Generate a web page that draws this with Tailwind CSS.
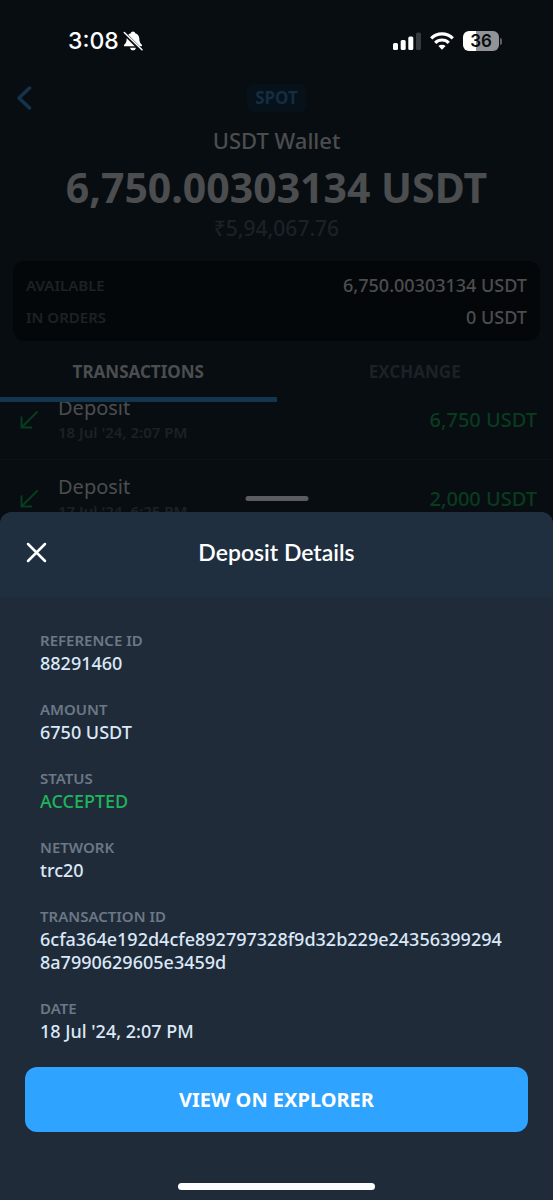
<!DOCTYPE html>
<html lang="en">
  <head>
    <meta charset="UTF-8" />
    <meta name="viewport" content="width=device-width, initial-scale=1.0" />
    <title>USDT Wallet</title>
    <script src="https://cdn.jsdelivr.net/npm/@tailwindcss/browser@4"></script>
  </head>
  <body class="bg-[#080d12] font-['Noto_Sans',sans-serif]">
    <main class="h-lvh flex flex-col overflow-hidden text-[#4c4d4f]">
      <!-- status bar -->
      <div
        class="h-[82px] shrink-0 pl-17 pr-[51px] flex items-center justify-between text-white font-['Inter',sans-serif]"
      >
        <div class="flex items-center gap-1">
          <span class="text-[23px] leading-8 font-medium">3:08</span>
          <svg class="w-5 h-5" viewBox="0 0 20 20" fill="currentColor">
            <path
              d="M10 .5c1.200 0 2 .8 2.200 1.700 2.600.8 4 2.800 4.100 5.300.1 3.300.8 4.600 2.300 5.900.9.900.4 1.800-.6 1.800H2c-1 0-1.500-.9-.6-1.800C2.900 12.100 3.600 10.800 3.700 7.500c.1-2.500 1.500-4.500 4.100-5.300C8 1.300 8.800.5 10 .5z"
            />
            <path d="M7 16.700h6c-.4 1.600-1.500 2.600-3 2.600s-2.600-1-3-2.600z" />
            <path d="M1 2l17.500 17.500" stroke="#080d12" stroke-width="3.500" />
            <path
              d="M1.300 1.500l17.700 17.200"
              stroke="currentColor"
              stroke-width="1.500"
              stroke-linecap="round"
            />
          </svg>
        </div>
        <div class="flex items-center gap-[9px]">
          <svg class="w-7 h-[18px]" viewBox="0 0 28 18" fill="currentColor">
            <rect x="0" y="11" width="5" height="7" rx="1.500" />
            <rect x="7.700" y="8" width="5" height="10" rx="1.500" />
            <rect x="15.300" y="4.500" width="5" height="13.500" rx="1.500" />
            <rect x="23" y="0.500" width="5" height="17.500" rx="1.500" fill="#36393d" />
          </svg>
          <svg
            class="w-6 h-[18px]"
            viewBox="0 0 24 18"
            fill="none"
            stroke="currentColor"
            stroke-width="3.200"
          >
            <path d="M1.200 6.300a15.300 15.300 0 0 1 21.600 0" />
            <path d="M5.200 10.800a9.700 9.700 0 0 1 13.600 0" />
            <path
              d="M12 17.800l-3.600-3.700a5.200 5.200 0 0 1 7.200 0z"
              fill="currentColor"
              stroke="none"
            />
          </svg>
          <div class="flex items-center gap-px">
            <div
              class="w-9 h-5 flex items-center justify-center rounded-md bg-linear-to-r from-white from-36% to-[#919396] to-36% text-[17px] leading-5 font-semibold text-[#080d12]"
            >
              36
            </div>
            <div class="w-[2px] h-[7px] rounded-r-full bg-[#5c5f63]"></div>
          </div>
        </div>
      </div>

      <!-- wallet header -->
      <header class="shrink-0 flex flex-col items-center">
        <div class="w-full h-8 px-4 grid grid-cols-3 items-center">
          <button type="button" aria-label="Back" class="w-4 text-[#14334c]">
            <svg
              class="w-4 h-6"
              viewBox="0 0 16 24"
              fill="none"
              stroke="currentColor"
              stroke-width="3.500"
              stroke-linecap="round"
              stroke-linejoin="round"
            >
              <path d="M13.500 2L3 12l10.500 10" />
            </svg>
          </button>
          <span
            class="justify-self-center h-7 px-2 flex items-center rounded-md bg-[#07111a] text-[17px] font-bold text-[#132d43]"
            >SPOT</span
          >
        </div>
        <h1 class="mt-2 text-[22px] leading-9 font-medium">USDT Wallet</h1>
        <p class="mt-1 text-[41px] leading-[50px] font-bold">
          6,750.00303134 USDT
        </p>
        <p class="mt-1 text-[21px] leading-6 font-medium text-[#1d2127]">
          ₹5,94,067.76
        </p>
      </header>

      <dl
        class="shrink-0 mx-[13px] mt-[21px] px-[13px] py-2 grid grid-cols-[auto_1fr] items-center rounded-xl bg-[#040709] text-lg leading-8 font-medium"
      >
        <dt class="text-[15px] font-semibold text-[#1d2127]">AVAILABLE</dt>
        <dd class="text-right">6,750.00303134 USDT</dd>
        <dt class="text-[15px] font-semibold text-[#1d2127]">IN ORDERS</dt>
        <dd class="text-right">0 USDT</dd>
      </dl>

      <nav class="shrink-0 grid grid-cols-2 text-[17px] font-bold">
        <button
          type="button"
          class="h-[61px] pt-[6px] border-b-5 border-[#123550]"
        >
          TRANSACTIONS
        </button>
        <button
          type="button"
          class="h-[61px] pt-[6px] border-b-5 border-transparent text-[#1d2127]"
        >
          EXCHANGE
        </button>
      </nav>

      <!-- list is scrolled a little under the tabs -->
      <div class="flex-1 overflow-hidden">
        <ul class="-mt-[21px]">
          <li
            class="h-[79px] pl-5 pr-4 flex items-center gap-5 border-b border-[#0d1217]"
          >
            <svg
              class="w-[18px] h-[18px] text-[#083c1f]"
              viewBox="0 0 18 18"
              fill="none"
              stroke="currentColor"
              stroke-width="2"
            >
              <path d="M17.500 .5L2 16M1.500 5.500v11H12" />
            </svg>
            <div class="flex-1">
              <p class="text-xl leading-6">Deposit</p>
              <p class="text-[15px] leading-6 font-semibold text-[#1d2127]">
                18 Jul '24, 2:07 PM
              </p>
            </div>
            <p class="text-xl font-medium text-[#083c1f]">6,750 USDT</p>
          </li>
          <li
            class="h-[79px] pl-5 pr-4 flex items-center gap-5 border-b border-[#0d1217]"
          >
            <svg
              class="w-[18px] h-[18px] text-[#083c1f]"
              viewBox="0 0 18 18"
              fill="none"
              stroke="currentColor"
              stroke-width="2"
            >
              <path d="M17.500 .5L2 16M1.500 5.500v11H12" />
            </svg>
            <div class="flex-1">
              <p class="text-xl leading-6">Deposit</p>
              <p class="text-[15px] leading-6 font-semibold text-[#1d2127]">
                17 Jul '24, 6:25 PM
              </p>
            </div>
            <p class="text-xl font-medium text-[#083c1f]">2,000 USDT</p>
          </li>
        </ul>
      </div>
    </main>

    <!-- bottom sheet -->
    <section
      role="dialog"
      aria-labelledby="sheetTitle"
      class="fixed inset-x-0 bottom-0 rounded-t-xl bg-[#202b39] text-[#dbe8f7]"
    >
      <div
        class="absolute -top-4 left-1/2 -translate-x-1/2 w-[63px] h-[5px] rounded-full bg-[#5a5c5f]"
      ></div>
      <div
        class="h-[85px] px-[26px] pb-1 grid grid-cols-[24px_1fr_24px] items-center rounded-t-xl bg-[#202f40] text-white"
      >
        <button type="button" aria-label="Close">
          <svg
            class="w-[21px] h-[21px]"
            viewBox="0 0 21 21"
            fill="none"
            stroke="currentColor"
            stroke-width="2.500"
            stroke-linecap="round"
          >
            <path d="M2 2l17 17M19 2L2 19" />
          </svg>
        </button>
        <h2
          id="sheetTitle"
          class="text-center text-[23px] font-semibold font-['Lato',sans-serif]"
        >
          Deposit Details
        </h2>
      </div>
      <dl
        class="pl-10 pr-11 pt-8 flex flex-col gap-[23px] text-lg leading-[23px] font-medium"
      >
        <div>
          <dt class="text-[15px] leading-[22px] font-semibold text-[#6b7886]">
            REFERENCE ID
          </dt>
          <dd class="mt-px">88291460</dd>
        </div>
        <div>
          <dt class="text-[15px] leading-[22px] font-semibold text-[#6b7886]">
            AMOUNT
          </dt>
          <dd class="mt-px">6750 USDT</dd>
        </div>
        <div>
          <dt class="text-[15px] leading-[22px] font-semibold text-[#6b7886]">
            STATUS
          </dt>
          <dd class="mt-px text-[#1fb55a]">ACCEPTED</dd>
        </div>
        <div>
          <dt class="text-[15px] leading-[22px] font-semibold text-[#6b7886]">
            NETWORK
          </dt>
          <dd class="mt-px">trc20</dd>
        </div>
        <div>
          <dt class="text-[15px] leading-[22px] font-semibold text-[#6b7886]">
            TRANSACTION ID
          </dt>
          <dd class="mt-px break-all">
            6cfa364e192d4cfe892797328f9d32b229e243563992948a7990629605e3459d
          </dd>
        </div>
        <div>
          <dt class="text-[15px] leading-[22px] font-semibold text-[#6b7886]">
            DATE
          </dt>
          <dd class="mt-px">18 Jul '24, 2:07 PM</dd>
        </div>
      </dl>
      <div class="px-[25px] pt-6">
        <button
          type="button"
          class="w-full h-[65px] rounded-xl bg-[#2ea3ff] text-xl text-white font-bold"
        >
          VIEW ON EXPLORER
        </button>
      </div>
      <div class="pt-[51px] pb-[10px] flex justify-center">
        <div class="w-[197px] h-[7px] rounded-full bg-white"></div>
      </div>
    </section>
  </body>
</html>
